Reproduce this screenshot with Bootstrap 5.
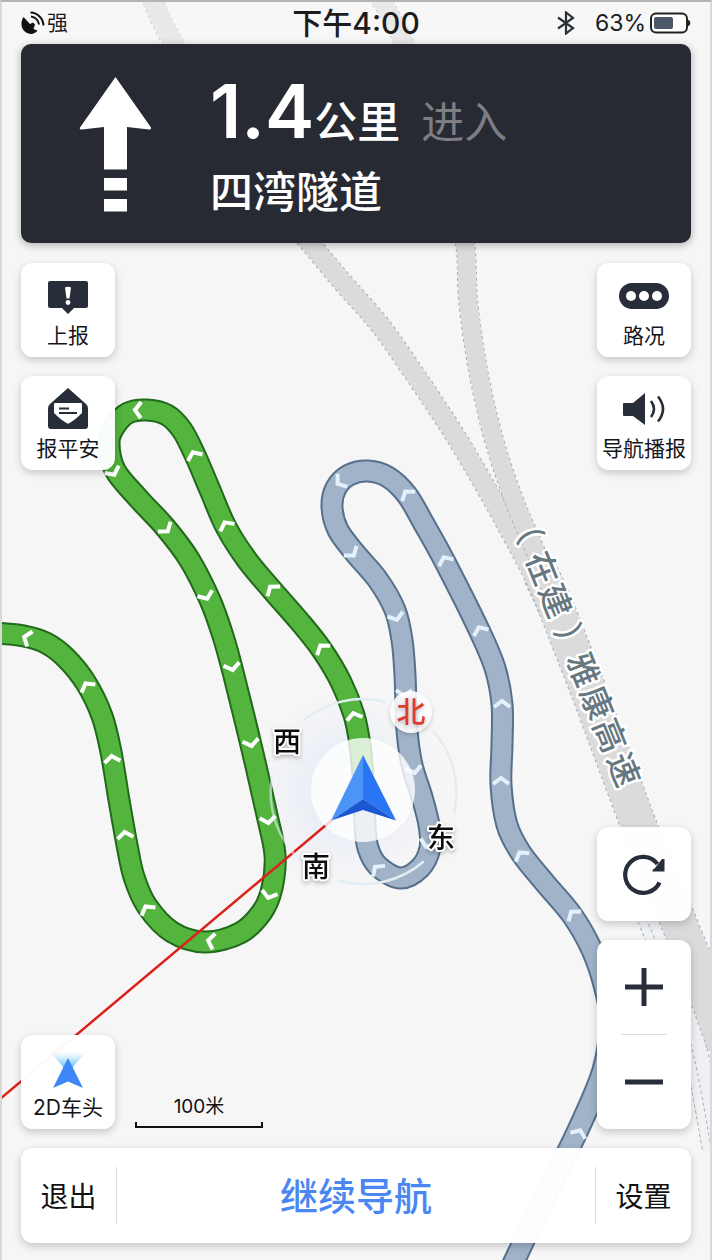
<!DOCTYPE html>
<html lang="zh-CN">
<head>
<meta charset="utf-8">
<meta name="viewport" content="width=device-width, initial-scale=1">
<title>导航</title>
<link href="https://cdn.jsdelivr.net/npm/bootstrap@5.3.0/dist/css/bootstrap.min.css" rel="stylesheet">
<style>
  body { font-family: Inter, "Noto Sans CJK SC", sans-serif; background: #f6f6f7; color: #111; }
  .screen { border: 2px solid #d9d9db; border-top-color: #b4b4b4; border-bottom: 0; }
  .map-layer { z-index: 0; }
  .ui-layer { z-index: 1; }
  .ui-body { padding: 0 19px 17px; }
  .status-bar { height: 42px; padding: 0 19px; font-size: 23px; line-height: 42px; color: #1c1c1e; background: rgba(248,248,248,.5); }
  .status-bar .signal { font-size: 21px; }
  .status-bar .clock { font-size: 30px; font-weight: 500; }
  .status-bar .side { flex: 1 1 0; }
  .status-bar .bluetooth { margin-right: 19px; }
  .guide { background: #282a33; border-radius: 10px; box-shadow: 0 2px 8px rgba(0,0,0,.3); padding: 30px 56px 21px; gap: 57px; color: #fff; }
  .guide .arrow { margin-bottom: 8px; }
  .guide .distance { font-size: 74px; line-height: 74px; font-weight: 600; }
  .guide .unit, .guide .road-name { font-size: 43px; font-weight: 500; line-height: 60px; }
  .guide .road-name { margin-top: 10px; }
  .guide .verb { font-size: 43px; line-height: 60px; color: #7d7e84; margin-left: 21px; }
  .middle { padding: 20px 0 19px; }
  .tile, .action-bar { background: rgba(255,255,255,.97); border-radius: 12px; box-shadow: 0 3px 8px rgba(0,0,0,.2); }
  .tile { width: 94px; }
  .tile.zoom-box { background: #fff; }
  .stack { gap: 19px; }
  .tile-btn { width: 94px; height: 94px; border: 0; padding: 0; font-size: 21px; line-height: 28px; color: #14161c; }
  .tile-btn.labelled { padding-bottom: 7px; gap: 2px; }
  .rule { width: 46px; height: 1px; background: #dcdcde; }
  .scale { width: 128px; margin: 0 auto 1px 20px; font-size: 19px; line-height: 24px; color: #111; }
  .scale-line { height: 6px; border: 2px solid #111; border-top: 0; margin-top: 3px; }
  .action-bar { height: 95px; }
  .action-bar button { border: 0; padding: 2px 0 0; font-size: 28px; color: #111; }
  .action-bar .side-btn { width: 95px; }
  .action-bar .main-btn { font-size: 38px; font-weight: 500; color: #4a87f2; }
  .divider { width: 1px; height: 57px; background: #dcdcde; }
  .compass { font-size: 28px; font-weight: 500; text-anchor: middle; paint-order: stroke; stroke: #fff; stroke-width: 4px; stroke-linejoin: round; fill: #0c0c0c; filter: drop-shadow(0 2px 2px rgba(0,0,0,.25)); }
  .compass .north { font-size: 29px; fill: #e03c2d; stroke: none; }
  .badge-shadow { filter: drop-shadow(0 2px 2px rgba(0,0,0,.2)); }
  .road-label { font-family: "Noto Sans CJK SC", sans-serif; font-size: 33px; font-weight: 500; fill: #66777f; paint-order: stroke; stroke: #fff; stroke-width: 5px; stroke-linejoin: round; text-anchor: middle; }
</style>
</head>
<body>
<main class="screen position-relative min-vh-100 d-flex overflow-hidden">
  <svg class="map-layer position-absolute top-0 start-0 w-100 h-100" viewBox="2 2 708 1258" preserveAspectRatio="xMidYMid slice" aria-label="地图">
    <defs>
      <radialGradient id="halo" cx=".5" cy=".5" r=".5">
        <stop offset=".5" stop-color="#d3def3" stop-opacity=".5"/>
        <stop offset="1" stop-color="#e3e9f5" stop-opacity="0"/>
      </radialGradient>
    </defs>
    <g id="roads" fill="none"></g>
    <circle cx="350" cy="790" r="98" fill="url(#halo)" opacity=".6"/>
    <g id="routes" fill="none" stroke-linecap="butt" stroke-linejoin="round"></g>
    <g class="road-label" transform="translate(529 535) rotate(68)">
      <text x="-9 36 71 114 145 181 216 253" y="12">（在建）雅康高速</text>
    </g>
    <line x1="0" y1="1099" x2="332" y2="820" stroke="#dc211a" stroke-width="2.5"/>
    <g fill="none" stroke="#e2edf3" stroke-width="2.5" stroke-linecap="round">
      <path d="M304 720A92 92 0 0 1 385 702" />
      <path d="M434 732A92 92 0 0 1 454 813"/>
      <path d="M423 862A92 92 0 0 1 340 881"/>
      <path d="M300 860A92 92 0 0 1 272 777" opacity=".6"/>
    </g>
    <circle cx="363" cy="790" r="52" fill="#fff" opacity=".8"/>
    <circle class="badge-shadow" cx="411" cy="712" r="21" fill="#fff" opacity=".88"/>
    <path d="M363 755L331 820.500 363 799z" fill="#4b95f6"/>
    <path d="M363 755L396 820.500 363 799z" fill="#2975f4"/>
    <path d="M363 799L331 820.500 363 810 396 820.500z" fill="#1c57d2"/>
    <g class="compass">
      <text class="north" x="411" y="723">北</text>
      <text x="287" y="752">西</text>
      <text x="441" y="848">东</text>
      <text x="316" y="877">南</text>
    </g>
  </svg>

  <div class="ui-layer position-relative d-flex flex-column flex-grow-1">
    <header class="status-bar d-flex align-items-center">
      <div class="side signal d-flex align-items-center">
        <svg width="26" height="26" viewBox="0 0 26 26" aria-hidden="true">
          <path d="M2.500 7C-1 13 0 19 5 22.500C9.500 25 14 24 16.500 20.500L12.500 19 14 14.500 12 12.500 9 14z" fill="#111"/>
          <path d="M10 6.500A9 9 0 0 1 18 14.500M9.500 2.500A13.500 13.500 0 0 1 22.500 15.500" fill="none" stroke="#111" stroke-width="2"/>
        </svg>
        <span>强</span>
      </div>
      <div class="clock">下午4:00</div>
      <div class="side d-flex align-items-center justify-content-end">
        <svg class="bluetooth" width="20" height="24" viewBox="0 0 20 24" aria-hidden="true"><path d="M2 6.500L17 17 10 22.500V1.500L17 7 2 17.500" fill="none" stroke="#26323b" stroke-width="2.2"/></svg>
        <span class="me-1">63%</span>
        <svg width="41" height="22" viewBox="0 0 41 22" aria-hidden="true"><rect x="1" y="1.500" width="36" height="19" rx="5" fill="#fff" stroke="#222" stroke-width="2"/><rect x="4" y="5" width="19" height="12" rx="2" fill="#4a5868"/><path d="M38 8c3 0 3 6 0 6z" fill="#222"/></svg>
      </div>
    </header>

    <div class="ui-body d-flex flex-column flex-grow-1">
      <section class="guide d-flex align-items-center">
        <svg class="arrow flex-shrink-0" width="76" height="140" viewBox="77 73 76 140" fill="#fff" aria-label="直行"><path d="M115.500 76L151 126.500Q151.500 128.500 149 128.500L127 126V168.500H104V126L82 128.500Q79 128.500 80 126.500z"/><path d="M104 177h23v12.500h-23zM104 198h23v12.500h-23z"/></svg>
        <div>
          <div class="d-flex align-items-baseline">
            <span class="distance">1.4</span><span class="unit">公里</span><span class="verb">进入</span>
          </div>
          <div class="road-name">四湾隧道</div>
        </div>
      </section>

      <div class="middle d-flex flex-grow-1">
        <div class="stack d-flex flex-column">
          <button class="tile tile-btn labelled d-flex flex-column align-items-center justify-content-end" type="button">
            <svg width="42" height="42" viewBox="0 0 42 42" aria-hidden="true"><path d="M3 3H39Q41 3 41 5V28Q41 30 39 30H27L21 36 15 30H3Q1 30 1 28V5Q1 3 3 3z" fill="#272e39"/><path d="M18 9.500Q21 8 24 9.500L22.500 20.500H19.500z" fill="#fff"/><circle cx="21" cy="24.500" r="2.400" fill="#fff"/></svg>
            <span>上报</span>
          </button>
          <button class="tile tile-btn labelled d-flex flex-column align-items-center justify-content-end" type="button">
            <svg width="42" height="46" viewBox="0 0 42 46" aria-hidden="true"><path d="M21 1L39 17Q41 19 41 21V39Q41 42 38 42H4Q1 42 1 39V21Q1 19 3 17z" fill="#272e39"/><path d="M7 17Q7 16 8 16H34Q35 16 35 17V26Q28 33 22.500 36 21 37 19.500 36 14 33 7 26z" fill="#fff"/><path d="M12 21.500h10M12 26h18" stroke="#272e39" stroke-width="1.800"/></svg>
            <span>报平安</span>
          </button>
          <button class="tile tile-btn labelled mt-auto d-flex flex-column align-items-center justify-content-end" type="button">
            <svg width="42" height="42" viewBox="0 0 42 42" aria-hidden="true"><defs><linearGradient id="beam" x2="0" y2="1"><stop offset="0" stop-color="#8fd5fa" stop-opacity="0"/><stop offset="1" stop-color="#68bdf5"/></linearGradient></defs><path d="M3 2H39L25 18H17z" fill="url(#beam)"/><path d="M21 8L36 38 21 31.500 6 38z" fill="#3d86f5"/></svg>
            <span>2D车头</span>
          </button>
        </div>
        <div class="scale align-self-end text-center">
          <div>100米</div>
          <div class="scale-line"></div>
        </div>
        <div class="stack d-flex flex-column">
          <button class="tile tile-btn labelled d-flex flex-column align-items-center justify-content-end" type="button">
            <svg width="52" height="42" viewBox="0 0 52 42" aria-hidden="true"><rect x="1" y="5" width="50" height="26" rx="13" fill="#272e39"/><g fill="#fff"><circle cx="13" cy="18" r="5"/><circle cx="26" cy="18" r="5"/><circle cx="39" cy="18" r="5"/></g></svg>
            <span>路况</span>
          </button>
          <button class="tile tile-btn labelled d-flex flex-column align-items-center justify-content-end" type="button">
            <svg width="44" height="44" viewBox="0 0 44 44" aria-hidden="true"><path d="M2 14H11L23 4V36L11 27H2Q1 27 1 26V15Q1 14 2 14z" fill="#272e39"/><path d="M29 12Q35 20 29 28M36 7.500Q46 20 36 32.500" fill="none" stroke="#272e39" stroke-width="2.600"/></svg>
            <span class="text-nowrap">导航播报</span>
          </button>
          <button class="tile tile-btn mt-auto d-flex align-items-center justify-content-center" type="button" aria-label="刷新">
            <svg width="46" height="46" viewBox="0 0 46 46" fill="none" aria-hidden="true"><path d="M38.500 31.500A18 18 0 1 1 36.500 13" stroke="#272e39" stroke-width="4.200"/><path d="M43.500 8V20.500H31.500V19L34 17 41 8z" fill="#272e39"/></svg>
          </button>
          <div class="tile zoom-box d-flex flex-column align-items-center">
            <button class="btn tile-btn d-flex align-items-center justify-content-center" type="button" aria-label="放大">
              <svg width="38" height="38" viewBox="0 0 38 38" aria-hidden="true"><path d="M0 19H38M19 0V38" stroke="#272e39" stroke-width="5"/></svg>
            </button>
            <div class="rule"></div>
            <button class="btn tile-btn d-flex align-items-center justify-content-center" type="button" aria-label="缩小">
              <svg width="38" height="38" viewBox="0 0 38 38" aria-hidden="true"><path d="M0 19H38" stroke="#272e39" stroke-width="5"/></svg>
            </button>
          </div>
        </div>
      </div>

      <nav class="action-bar d-flex align-items-center">
        <button class="side-btn bg-transparent h-100" type="button">退出</button>
        <div class="divider"></div>
        <button class="main-btn bg-transparent h-100 flex-grow-1" type="button">继续导航</button>
        <div class="divider"></div>
        <button class="side-btn bg-transparent h-100" type="button">设置</button>
      </nav>
    </div>
  </div>
</main>
<script src="https://cdn.jsdelivr.net/npm/bootstrap@5.3.0/dist/js/bootstrap.bundle.min.js"></script>
<script>
  // Smooth curve through a list of map points (Catmull-Rom to cubic Bezier).
  function curve(p) {
    let d = `M${p[0]}`;
    for (let i = 0; i < p.length - 1; i++) {
      const a = p[i - 1] || p[i], b = p[i], c = p[i + 1], e = p[i + 2] || c;
      d += `C${b[0] + (c[0] - a[0]) / 6} ${b[1] + (c[1] - a[1]) / 6} ${c[0] - (e[0] - b[0]) / 6} ${c[1] - (e[1] - b[1]) / 6} ${c[0]} ${c[1]}`;
    }
    return d;
  }
  function line(parent, d, attrs) {
    const el = document.createElementNS('http://www.w3.org/2000/svg', 'path');
    el.setAttribute('d', d);
    for (const k in attrs) el.setAttribute(k, attrs[k]);
    document.getElementById(parent).append(el);
  }

  const roadA = [[150,-5],[173,43],[235,150],[310,243],[345,285],[380,325],[420,382],[458,440],[493,500],[515,540],[536,580],[549,610]];
  const roadB = [[378,-5],[404,43],[448,150],[465,243],[468,300],[478,370],[494,440],[514,500],[533,545],[556,600]];
  const merged = [[541,575],[553,600],[570,643],[594,705],[636,818],[661,880],[694,960],[725,1045]];
  const roads = [
    { pts: [[650,915],[680,990],[698,1060],[715,1150]], w: 22, fill: '#eef0f3' },
    { pts: [[640,915],[670,990],[690,1060],[707,1150]], w: 8, fill: '#f1f2f4' },
    { pts: merged, w: 35, fill: '#dbdbdb' },
    { pts: roadA, w: 19, fill: '#dbdbdb' },
    { pts: roadB, w: 18, fill: '#dbdbdb' }
  ];
  for (const r of roads) {
    const d = curve(r.pts);
    line('roads', d, { stroke: '#a3b1c1', 'stroke-width': r.w + 2, 'stroke-dasharray': '3 3' });
    line('roads', d, { stroke: r.fill, 'stroke-width': r.w });
  }

  const passed = [[364,785],[365,825],[368,848],[378,866],[400,878],[420,868],[430,848],[429,825],[422,797],[412,765],[407,730],[405,675],[402,640],[395,610],[378,580],[355,553],[338,530],[332,507],[336,488],[349,475],[368,471],[388,477],[407,495],[424,524],[445,562],[480,632],[495,668],[502,704],[502,745],[501,785],[507,825],[521,853],[545,883],[572,915],[592,950],[604,985],[610,1020],[603,1070],[578,1130],[540,1207],[511,1268]];
  const ahead = [[363,775],[360,745],[354,715],[341,682],[322,650],[300,622],[272,590],[247,560],[226,527],[210,490],[195,455],[182,430],[167,415],[147,410],[128,413],[115,426],[109,442],[115,470],[138,498],[165,527],[189,559],[210,600],[223,636],[233,672],[251,745],[267,815],[275,855],[272,888],[262,912],[240,933],[205,942],[172,932],[147,906],[134,877],[127,845],[119,800],[111,752],[102,716],[86,683],[66,658],[46,643],[24,636],[-5,633]];
  const routes = [
    { pts: passed, edge: '#56708b', fill: '#a0b3c9', mark: '#e4f1fc', marks: [[377,869,-42],[427,844,200],[414,770,168],[404,693,180],[396,617,163],[352,553,143],[340,482,233],[407,494,-35],[445,560,-25],[480,630,-24],[502,704,0],[501,781,0],[521,855,-32],[573,914,-38],[579,1133,22]] },
    { pts: ahead, edge: '#22691b', fill: '#53b43e', mark: '#fff', marks: [[354,716,-14],[322,648,-35],[272,589,-38],[226,525,-28],[194,455,-24],[138,410,-88],[113,472,153],[166,529,142],[206,596,158],[232,667,168],[251,743,168],[268,820,172],[269,895,195],[211,941,-80],[147,909,-30],[125,835,-8],[112,759,-8],[87,686,-30],[27,638,-70]] }
  ];
  for (const r of routes) {
    const d = curve(r.pts);
    line('routes', d, { stroke: r.edge, 'stroke-width': 23 });
    line('routes', d, { stroke: r.fill, 'stroke-width': 19 });
    for (const [x, y, a] of r.marks)
      line('routes', 'M-8 3L0 -3 8 3', { transform: `translate(${x} ${y}) rotate(${a})`, stroke: r.mark, 'stroke-width': 4, 'stroke-linejoin': 'miter' });
  }
</script>
</body>
</html>
